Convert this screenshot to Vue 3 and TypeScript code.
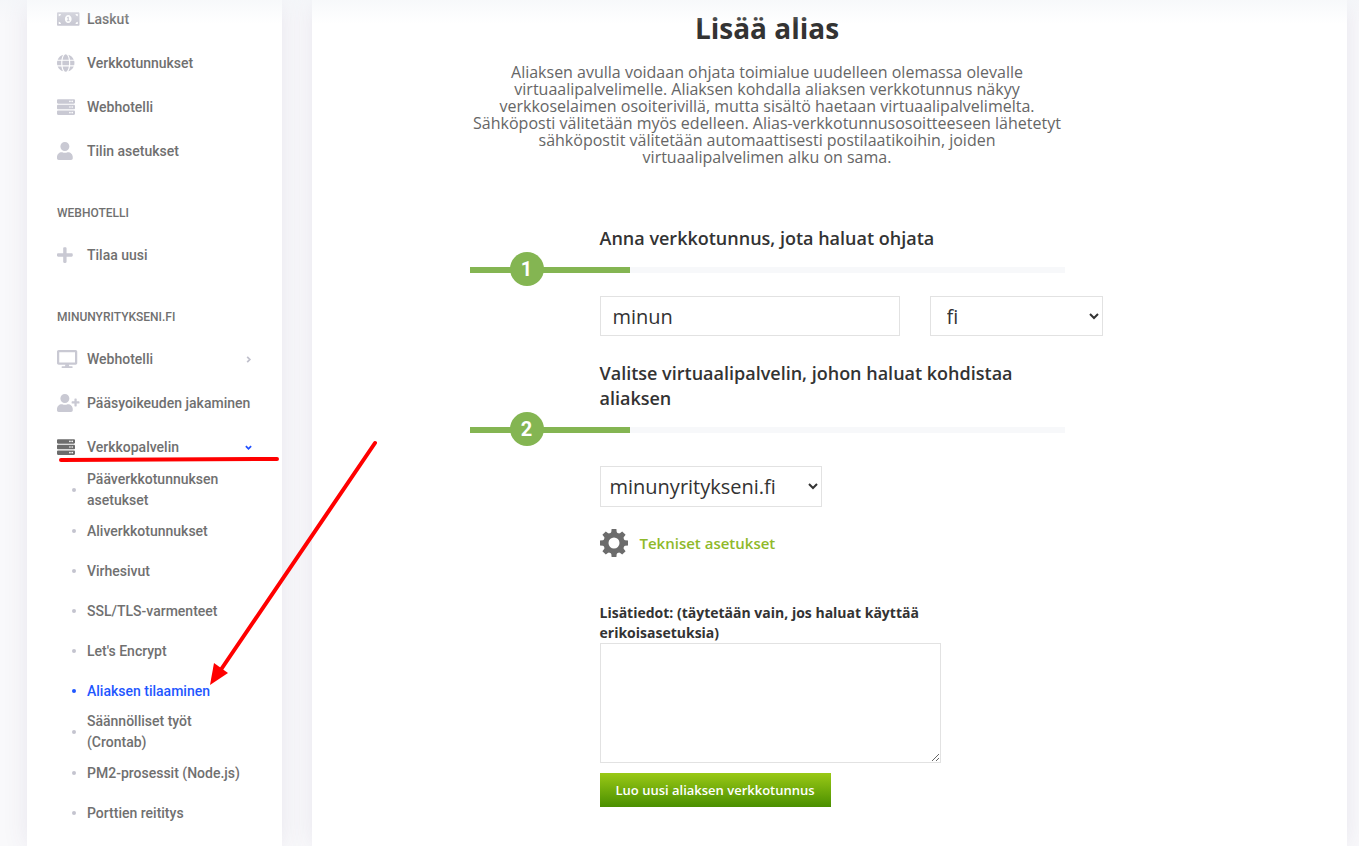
<script setup lang="ts">
import { ref } from 'vue'

interface Icon {
  width: number
  path: string
}

interface NavItem {
  label: string
  icon: string
  expandable?: boolean
}

const rack =
  'M480 160H32c-17.673 0-32-14.327-32-32V64c0-17.673 14.327-32 32-32h448c17.673 0 32 14.327 32 32v64c0 17.673-14.327 32-32 32zm-48-88c-13.255 0-24 10.745-24 24s10.745 24 24 24 24-10.745 24-24-10.745-24-24-24zm-64 0c-13.255 0-24 10.745-24 24s10.745 24 24 24 24-10.745 24-24-10.745-24-24-24zm112 248H32c-17.673 0-32-14.327-32-32v-64c0-17.673 14.327-32 32-32h448c17.673 0 32 14.327 32 32v64c0 17.673-14.327 32-32 32zm-48-88c-13.255 0-24 10.745-24 24s10.745 24 24 24 24-10.745 24-24-10.745-24-24-24zm-64 0c-13.255 0-24 10.745-24 24s10.745 24 24 24 24-10.745 24-24-10.745-24-24-24zm112 248H32c-17.673 0-32-14.327-32-32v-64c0-17.673 14.327-32 32-32h448c17.673 0 32 14.327 32 32v64c0 17.673-14.327 32-32 32zm-48-88c-13.255 0-24 10.745-24 24s10.745 24 24 24 24-10.745 24-24-10.745-24-24-24zm-64 0c-13.255 0-24 10.745-24 24s10.745 24 24 24 24-10.745 24-24-10.745-24-24-24z'
const person =
  'M224 256c70.7 0 128-57.3 128-128S294.7 0 224 0 96 57.3 96 128s57.3 128 128 128zm89.6 32h-16.7c-22.2 10.2-46.9 16-72.9 16s-50.6-5.8-72.9-16h-16.7C60.2 288 0 348.2 0 422.4V464c0 26.5 21.5 48 48 48h352c26.5 0 48-21.5 48-48v-41.6c0-74.2-60.2-134.4-134.4-134.4z'

const icons: Record<string, Icon> = {
  bill: {
    width: 640,
    path: 'M352 288h-16v-88c0-4.42-3.58-8-8-8h-13.58c-4.74 0-9.37 1.4-13.31 4.03l-15.33 10.22a7.994 7.994 0 0 0-2.22 11.09l8.88 13.31a7.994 7.994 0 0 0 11.09 2.22l.47-.31V288h-16c-4.42 0-8 3.58-8 8v16c0 4.42 3.58 8 8 8h64c4.42 0 8-3.58 8-8v-16c0-4.42-3.58-8-8-8zM608 64H32C14.33 64 0 78.33 0 96v320c0 17.67 14.33 32 32 32h576c17.67 0 32-14.33 32-32V96c0-17.67-14.33-32-32-32zM48 400v-64c35.35 0 64 28.65 64 64H48zm0-224v-64h64c0 35.35-28.65 64-64 64zm272 192c-53.02 0-96-50.15-96-112 0-61.86 42.98-112 96-112s96 50.13 96 112c0 61.87-43 112-96 112zm272 32h-64c0-35.35 28.65-64 64-64v64zm0-224c-35.35 0-64-28.65-64-64h64v64z',
  },
  globe: {
    width: 496,
    path: 'M336.5 160C322 70.7 287.8 8 248 8s-74 62.7-88.5 152h177zM152 256c0 22.2 1.2 43.5 3.3 64h185.3c2.1-20.5 3.3-41.8 3.3-64s-1.2-43.5-3.3-64H155.3c-2.1 20.5-3.3 41.8-3.3 64zm324.7-96c-28.6-67.9-86.5-120.4-158-141.6 24.4 33.8 41.2 84.7 50 141.6h108zM177.2 18.4C105.8 39.6 47.8 92.1 19.3 160h108c8.7-56.9 25.5-107.8 49.9-141.6zM487.4 192H372.7c2.1 21 3.3 42.5 3.3 64s-1.2 43-3.3 64h114.6c5.5-20.5 8.6-41.8 8.6-64s-3.1-43.5-8.5-64zM120 256c0-21.5 1.2-43 3.3-64H8.6C3.2 212.5 0 233.8 0 256s3.2 43.5 8.6 64h114.6c-2-21-3.2-42.5-3.2-64zm39.5 96c14.5 89.3 48.7 152 88.5 152s74-62.7 88.5-152h-177zm159.3 141.6c71.4-21.2 129.4-73.7 158-141.6h-108c-8.8 56.9-25.6 107.8-50 141.6zM19.3 352c28.6 67.9 86.5 120.4 158 141.6-24.4-33.8-41.2-84.7-50-141.6h-108z',
  },
  server: { width: 512, path: rack },
  user: { width: 448, path: person },
  plus: {
    width: 448,
    path: 'M416 208H272V64c0-17.67-14.33-32-32-32h-32c-17.67 0-32 14.33-32 32v144H32c-17.67 0-32 14.33-32 32v32c0 17.67 14.33 32 32 32h144v144c0 17.67 14.33 32 32 32h32c17.67 0 32-14.33 32-32V304h144c17.67 0 32-14.33 32-32v-32c0-17.67-14.33-32-32-32z',
  },
  desktop: {
    width: 576,
    path: 'M528 0H48C21.5 0 0 21.5 0 48v320c0 26.5 21.5 48 48 48h192l-16 48h-72c-13.3 0-24 10.7-24 24s10.7 24 24 24h272c13.3 0 24-10.7 24-24s-10.7-24-24-24h-72l-16-48h192c26.5 0 48-21.5 48-48V48c0-26.5-21.5-48-48-48zm-16 352H64V64h448v288z',
  },
  share: {
    width: 640,
    path:
      'M624 208h-64v-64c0-8.8-7.2-16-16-16h-32c-8.8 0-16 7.2-16 16v64h-64c-8.8 0-16 7.2-16 16v32c0 8.8 7.2 16 16 16h64v64c0 8.8 7.2 16 16 16h32c8.8 0 16-7.2 16-16v-64h64c8.8 0 16-7.2 16-16v-32c0-8.8-7.2-16-16-16z' +
      person,
  },
}

const groups: { title: string; items: NavItem[] }[] = [
  {
    title: '',
    items: [
      { label: 'Laskut', icon: 'bill' },
      { label: 'Verkkotunnukset', icon: 'globe' },
      { label: 'Webhotelli', icon: 'server' },
      { label: 'Tilin asetukset', icon: 'user' },
    ],
  },
  { title: 'Webhotelli', items: [{ label: 'Tilaa uusi', icon: 'plus' }] },
  {
    title: 'minunyritykseni.fi',
    items: [
      { label: 'Webhotelli', icon: 'desktop', expandable: true },
      { label: 'Pääsyoikeuden jakaminen', icon: 'share' },
      { label: 'Verkkopalvelin', icon: 'server', expandable: true },
    ],
  },
]

const openItem = 'Verkkopalvelin'
const subItems = [
  'Pääverkkotunnuksen asetukset',
  'Aliverkkotunnukset',
  'Virhesivut',
  'SSL/TLS-varmenteet',
  "Let's Encrypt",
  'Aliaksen tilaaminen',
  'Säännölliset työt (Crontab)',
  'PM2-prosessit (Node.js)',
  'Porttien reititys',
]
const currentSub = 'Aliaksen tilaaminen'

const domain = ref('minun')
const tld = ref('fi')
const host = ref('minunyritykseni.fi')
const notes = ref('')
const gearTeeth = [0, 45, 90, 135, 180, 225, 270, 315]
</script>

<template>
  <div class="page">
    <nav class="sidebar" aria-label="Päävalikko">
      <section v-for="group in groups" :key="group.title" class="group">
        <h2 v-if="group.title" class="group-title">{{ group.title }}</h2>
        <ul class="items">
          <li v-for="item in group.items" :key="item.label">
            <a href="#" class="item" :class="{ open: item.label === openItem }">
              <svg
                class="item-icon"
                :viewBox="`0 0 ${icons[item.icon].width} 512`"
                preserveAspectRatio="xMinYMid meet"
                aria-hidden="true"
              >
                <path :d="icons[item.icon].path" />
              </svg>
              <span class="item-label">{{ item.label }}</span>
              <svg v-if="item.expandable" class="chevron" viewBox="0 0 8 8" aria-hidden="true">
                <path :d="item.label === openItem ? 'M1 2.5 4 5.5 7 2.5' : 'M2.5 1 5.5 4 2.5 7'" />
              </svg>
            </a>
          </li>
        </ul>
      </section>
      <ul class="sub-items">
        <li v-for="sub in subItems" :key="sub">
          <a href="#" class="sub-item" :class="{ current: sub === currentSub }">
            <span class="dot"></span>
            <span>{{ sub }}</span>
          </a>
        </li>
      </ul>
    </nav>

    <main class="content">
      <form class="form" @submit.prevent>
        <header class="intro">
          <h1>Lisää alias</h1>
          <p>
            Aliaksen avulla voidaan ohjata toimialue uudelleen olemassa olevalle
            virtuaalipalvelimelle. Aliaksen kohdalla aliaksen verkkotunnus näkyy verkkoselaimen
            osoiterivillä, mutta sisältö haetaan virtuaalipalvelimelta. Sähköposti välitetään myös
            edelleen. Alias-verkkotunnusosoitteeseen lähetetyt sähköpostit välitetään
            automaattisesti postilaatikoihin, joiden virtuaalipalvelimen alku on sama.
          </p>
        </header>

        <label class="step-title" for="domain">Anna verkkotunnus, jota haluat ohjata</label>
        <div class="step-bar"><span class="step-number">1</span></div>
        <div class="fields">
          <input id="domain" v-model="domain" class="domain" type="text" />
          <select v-model="tld" class="tld" aria-label="Verkkotunnuksen pääte">
            <option>fi</option>
            <option>com</option>
          </select>
        </div>

        <label class="step-title" for="host">Valitse virtuaalipalvelin, johon haluat kohdistaa aliaksen</label>
        <div class="step-bar"><span class="step-number">2</span></div>
        <div class="details">
          <select id="host" v-model="host" class="host">
            <option>minunyritykseni.fi</option>
          </select>
          <a href="#" class="technical">
            <svg class="gear" viewBox="-14 -14 28 28" aria-hidden="true">
              <circle r="8" />
              <path
                v-for="angle in gearTeeth"
                :key="angle"
                d="M-4.2-9 -2.7-11 -2.4-14H2.4L2.7-11 4.2-9Z"
                :transform="`rotate(${angle})`"
              />
            </svg>
            <span>Tekniset asetukset</span>
          </a>
          <label class="notes-label" for="notes">Lisätiedot: (täytetään vain, jos haluat käyttää erikoisasetuksia)</label>
          <textarea id="notes" v-model="notes" class="notes"></textarea>
          <button class="submit" type="submit">Luo uusi aliaksen verkkotunnus</button>
        </div>
      </form>
    </main>

    <div class="top-fade"></div>
    <svg class="annotation" width="400" height="700" aria-hidden="true">
      <path class="stroke" d="M61 460 277 459" />
      <path class="stroke" d="M375 443 220 671" />
      <path class="head" d="M210 685 214 663 228 673Z" />
    </svg>
  </div>
</template>

<style>
body {
  margin: 0;
  background: #f9f9fb;
}
</style>

<style scoped>
.page {
  position: relative;
  display: flex;
  gap: 30px;
  min-height: 100vh;
  padding: 0 12px 0 27px;
  box-sizing: border-box;
  overflow: hidden;
  font-family: "Open Sans", "Liberation Sans", sans-serif;
  color: #333;
}

.sidebar,
.content {
  background: #fff;
  box-shadow: 0 0 24px rgba(82, 63, 115, 0.1);
}

.sidebar {
  flex: 0 0 255px;
  box-sizing: border-box;
  padding: 1px 30px 0;
  font-family: Roboto, "Liberation Sans", sans-serif;
  font-size: 14px;
  font-weight: 500;
  line-height: 21px;
}

ul {
  margin: 0;
  padding: 0;
  list-style: none;
}

a {
  text-decoration: none;
}

.group + .group {
  margin-top: 34px;
}

.group-title {
  margin: 0 0 14px;
  font-size: 12px;
  font-weight: 500;
  line-height: 20px;
  text-transform: uppercase;
  color: #707070;
}

.items {
  display: flex;
  flex-direction: column;
  gap: 8px;
}

.item {
  display: flex;
  align-items: center;
  gap: 6px;
  height: 36px;
  color: #707070;
}

.item-icon {
  flex: none;
  width: 24px;
  height: 18px;
  fill: #c9c9d3;
}

.open .item-icon {
  fill: #6c6c6c;
}

.item-label {
  flex: 1;
  white-space: nowrap;
}

.chevron {
  width: 7px;
  height: 7px;
  fill: none;
  stroke: #c0c0cc;
  stroke-width: 2;
}

.open .chevron {
  stroke: #1f4fff;
}

.sub-items {
  margin-top: 4px;
}

.sub-item {
  display: flex;
  align-items: center;
  gap: 11px;
  min-height: 40px;
  padding-left: 15px;
  color: #707070;
}

.dot {
  flex: none;
  width: 4px;
  height: 4px;
  border-radius: 50%;
  background: #c4c4cf;
}

.current {
  color: #1f57ff;
}

.current .dot {
  background: #1f57ff;
}

.content {
  flex: 1;
  min-width: 0;
}

.form {
  width: 720px;
  max-width: 100%;
  margin: 0 auto;
  padding: 8px 0 39px;
}

.intro,
.step-bar {
  max-width: 595px;
}

.intro {
  margin-bottom: 60px;
  text-align: center;
}

h1 {
  margin: 0 0 16px;
  font-size: 28px;
  font-weight: 700;
  line-height: 40px;
}

p {
  margin: 0;
  font-size: 16px;
  font-weight: 400;
  line-height: 17px;
  color: #666;
}

.step-title {
  display: block;
  max-width: 465px;
  margin: 0 0 16px 130px;
  font-size: 18px;
  font-weight: 600;
  line-height: 25px;
}

.step-bar {
  position: relative;
  height: 6px;
  background: linear-gradient(#84b552, #84b552) 0 0 / 160px 100% no-repeat #f7f8fa;
}

.step-number {
  position: absolute;
  top: -15px;
  left: 40px;
  width: 34px;
  height: 34px;
  border-radius: 50%;
  background: #84b552;
  font-family: Roboto, "Liberation Sans", sans-serif;
  font-size: 20px;
  font-weight: 700;
  line-height: 34px;
  text-align: center;
  color: #fff;
}

input,
select,
textarea {
  box-sizing: border-box;
  border: 1px solid #e2e2e2;
  border-radius: 0;
  background: #fff;
  font-family: inherit;
  font-size: 20px;
  font-weight: 400;
  color: #333;
}

.fields {
  display: flex;
  gap: 30px;
  margin: 23px 0 25px 130px;
}

.domain {
  width: 300px;
  height: 40px;
  padding: 0 12px;
}

.tld {
  width: 173px;
  height: 40px;
  padding: 0 1px 0 12px;
}

.details {
  display: flex;
  flex-direction: column;
  align-items: flex-start;
  margin: 33px 0 0 130px;
}

.host {
  width: 222px;
  height: 41px;
  padding: 0 1px 0 5px;
}

.technical {
  display: flex;
  align-items: center;
  gap: 12px;
  margin: 22px 0 46px;
  font-size: 15px;
  font-weight: 600;
  line-height: 28px;
  color: #8fb92a;
}

.gear {
  width: 28px;
  height: 28px;
  fill: #6c6c6c;
}

.gear circle {
  fill: none;
  stroke: #6c6c6c;
  stroke-width: 5;
}

.notes-label {
  max-width: 341px;
  font-size: 14px;
  font-weight: 700;
  line-height: 20px;
}

.notes {
  width: 341px;
  height: 120px;
  margin: 0 0 10px;
}

.submit {
  height: 34px;
  padding: 0 16px;
  border: 0;
  background: linear-gradient(#9ac916, #4a8f00);
  font-family: inherit;
  font-size: 13px;
  font-weight: 600;
  color: #fff;
}

.top-fade {
  position: absolute;
  inset: 0 0 auto;
  height: 24px;
  background: linear-gradient(rgba(242, 245, 248, 0.6), rgba(250, 252, 252, 0));
  pointer-events: none;
}

.annotation {
  position: absolute;
  top: 0;
  left: 0;
  pointer-events: none;
}

.stroke {
  fill: none;
  stroke: #f00;
  stroke-width: 4;
  stroke-linecap: round;
}

.head {
  fill: #f00;
}
</style>
